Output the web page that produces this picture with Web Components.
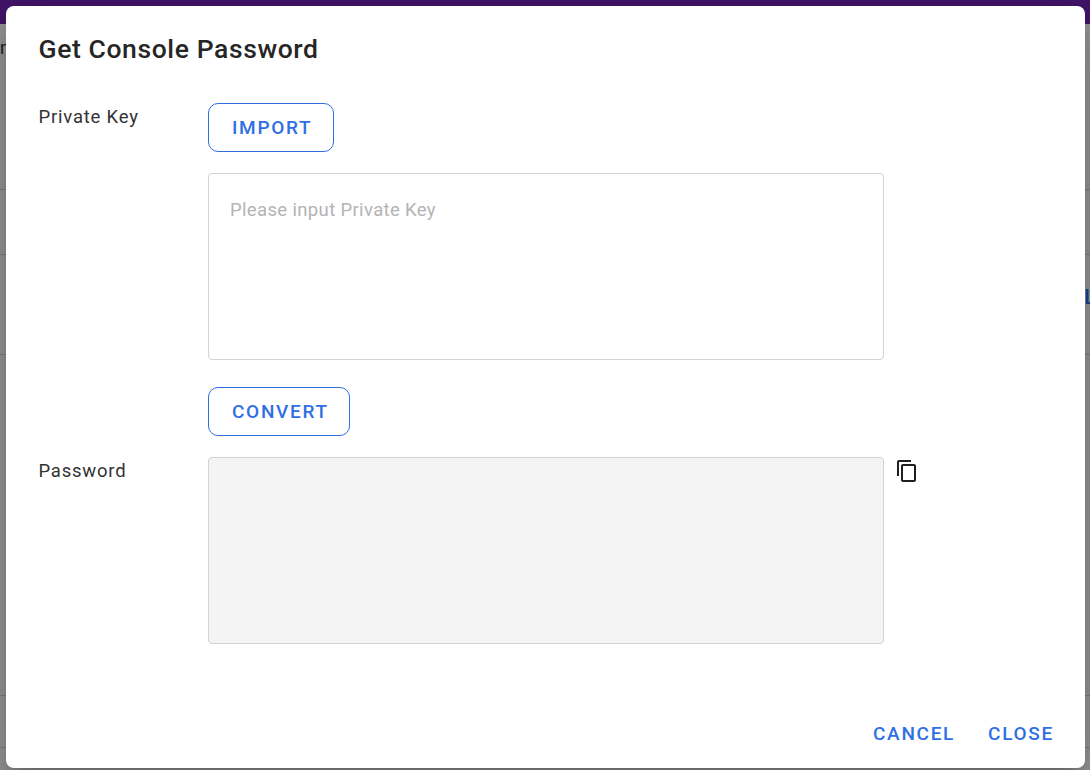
<!DOCTYPE html>
<html>
<head>
<meta charset="utf-8">
<title>Get Console Password</title>
<style>
  html, body { margin: 0; height: 100%; overflow: hidden; font-family: Roboto, "Liberation Sans", sans-serif; }
</style>
</head>
<body>
<console-page>
  <password-dialog heading="Get Console Password"></password-dialog>
</console-page>
<script>
class ConsolePage extends HTMLElement {
  constructor() {
    super();
    this.attachShadow({ mode: "open" });
    this.shadowRoot.innerHTML = `
<style>
  :host { display: block; position: relative; width: 1090px; height: 770px; overflow: hidden; background: #fff; }
  .bar { height: 24px; background: #6e22b0; }
  .rows { display: flex; flex-direction: column; color: #1f78ff; font-size: 18px; }
  .row { border-bottom: 1px solid #d8d8d8; display: flex; justify-content: space-between; box-sizing: border-box; }
  .r1 { height: 166px; padding-top: 13px; }
  .r2 { height: 65px; }
  .r3 { height: 100px; padding-top: 30px; }
  .r3 span:last-child { margin-right: -5.5px; font-size: 21px; font-weight: 500; }
  .r4 { height: 341px; }
  .r5 { height: 52px; }
  .scrim { position: absolute; inset: 0; background: rgba(0,0,0,.4); }
</style>
<div class="bar"></div>
<div class="rows">
  <div class="row r1"><span style="color:#333">m</span></div>
  <div class="row r2"></div>
  <div class="row r3"><span></span><span>L</span></div>
  <div class="row r4"></div>
  <div class="row r5"></div>
</div>
<div class="scrim"></div>
<slot></slot>`;
  }
}
customElements.define("console-page", ConsolePage);

class OutlineButton extends HTMLElement {
  constructor() {
    super();
    this.attachShadow({ mode: "open" });
    this.shadowRoot.innerHTML = `
<style>
  :host { display: inline-flex; }
  button {
    height: 49px; padding: 0 20.5px 0 23.5px; box-sizing: border-box; background: #fff; cursor: pointer;
    border: 1px solid #2f6fe4; border-radius: 10px; color: #2f6fe4;
    font: 500 19px Roboto, "Liberation Sans", sans-serif; letter-spacing: 1.7px;
  }
  :host([flat]) button { border: 0; background: none; height: 36px; padding: 0; }
</style>
<button type="button"><slot></slot></button>`;
  }
}
customElements.define("outline-button", OutlineButton);

class FieldRow extends HTMLElement {
  constructor() {
    super();
    this.attachShadow({ mode: "open" });
    this.shadowRoot.innerHTML = `
<style>
  :host { display: grid; grid-template-columns: 169px 1fr; align-items: start; }
  .label { font-size: 18.5px; letter-spacing: .78px; color: #333; line-height: 24px; padding-top: 2px; }
  .body { display: flex; flex-direction: column; align-items: flex-start; }
</style>
<div class="label"><slot name="label"></slot></div>
<div class="body"><slot></slot></div>`;
  }
}
customElements.define("field-row", FieldRow);

class TextBox extends HTMLElement {
  constructor() {
    super();
    this.attachShadow({ mode: "open" });
    const ph = this.getAttribute("placeholder") || "";
    this.shadowRoot.innerHTML = `
<style>
  :host { display: block; width: 676px; height: 187px; }
  textarea {
    display: block; width: 100%; height: 100%; box-sizing: border-box; resize: none; outline: 0;
    border: 1px solid #d3d3d3; border-radius: 4px; padding: 24px 21.5px; background: #fff; color: #333;
    font: 18.5px/24px Roboto, "Liberation Sans", sans-serif; letter-spacing: .35px;
  }
  textarea::placeholder { color: #b4b4b4; opacity: 1; }
  textarea:disabled { background: #f4f4f4; }
</style>
<textarea placeholder="${ph}"></textarea>`;
    this.shadowRoot.querySelector("textarea").disabled = this.hasAttribute("disabled");
  }
}
customElements.define("text-box", TextBox);

class PasswordDialog extends HTMLElement {
  constructor() {
    super();
    this.attachShadow({ mode: "open" });
    this.shadowRoot.innerHTML = `
<style>
  :host {
    position: absolute; left: 6px; top: 6px; width: 1079px; height: 762px; box-sizing: border-box;
    display: flex; flex-direction: column; background: #fff; border-radius: 8px; padding: 26px 31px 17px 32.5px;
    box-shadow: 0 11px 15px -7px rgba(0,0,0,.2), 0 24px 38px 3px rgba(0,0,0,.14), 0 9px 46px 8px rgba(0,0,0,.12);
  }
  h2 { margin: 0 0 37px; font: 500 26.5px/34px Roboto, "Liberation Sans", sans-serif; letter-spacing: .6px; color: #262626; }
  .gap1 { height: 21px; }
  .gap2 { height: 27px; }
  .gap3 { height: 21px; }
  .pw { display: flex; align-items: flex-start; gap: 11.7px; }
  .copy { width: 24px; height: 24px; display: block; margin-top: 2px; }
  .foot { margin-top: auto; display: flex; justify-content: flex-end; gap: 33px; }
</style>
<h2></h2>
<field-row>
  <span slot="label">Private Key</span>
  <outline-button>IMPORT</outline-button>
  <div class="gap1"></div>
  <text-box placeholder="Please input Private Key"></text-box>
  <div class="gap2"></div>
  <outline-button>CONVERT</outline-button>
  <div class="gap3"></div>
</field-row>
<field-row>
  <span slot="label">Password</span>
  <div class="pw">
    <text-box disabled></text-box>
    <svg class="copy" viewBox="0 0 24 24" fill="#1f1f1f"><path d="M16 1H4c-1.100 0-2 .9-2 2v14h2V3h12V1zm3 4H8c-1.100 0-2 .9-2 2v14c0 1.100.9 2 2 2h11c1.100 0 2-.9 2-2V7c0-1.100-.9-2-2-2zm0 16H8V7h11v14z"/></svg>
  </div>
</field-row>
<div class="foot">
  <outline-button flat>CANCEL</outline-button>
  <outline-button flat>CLOSE</outline-button>
</div>`;
    this.shadowRoot.querySelector("h2").textContent = this.getAttribute("heading");
  }
}
customElements.define("password-dialog", PasswordDialog);
</script>
</body>
</html>
